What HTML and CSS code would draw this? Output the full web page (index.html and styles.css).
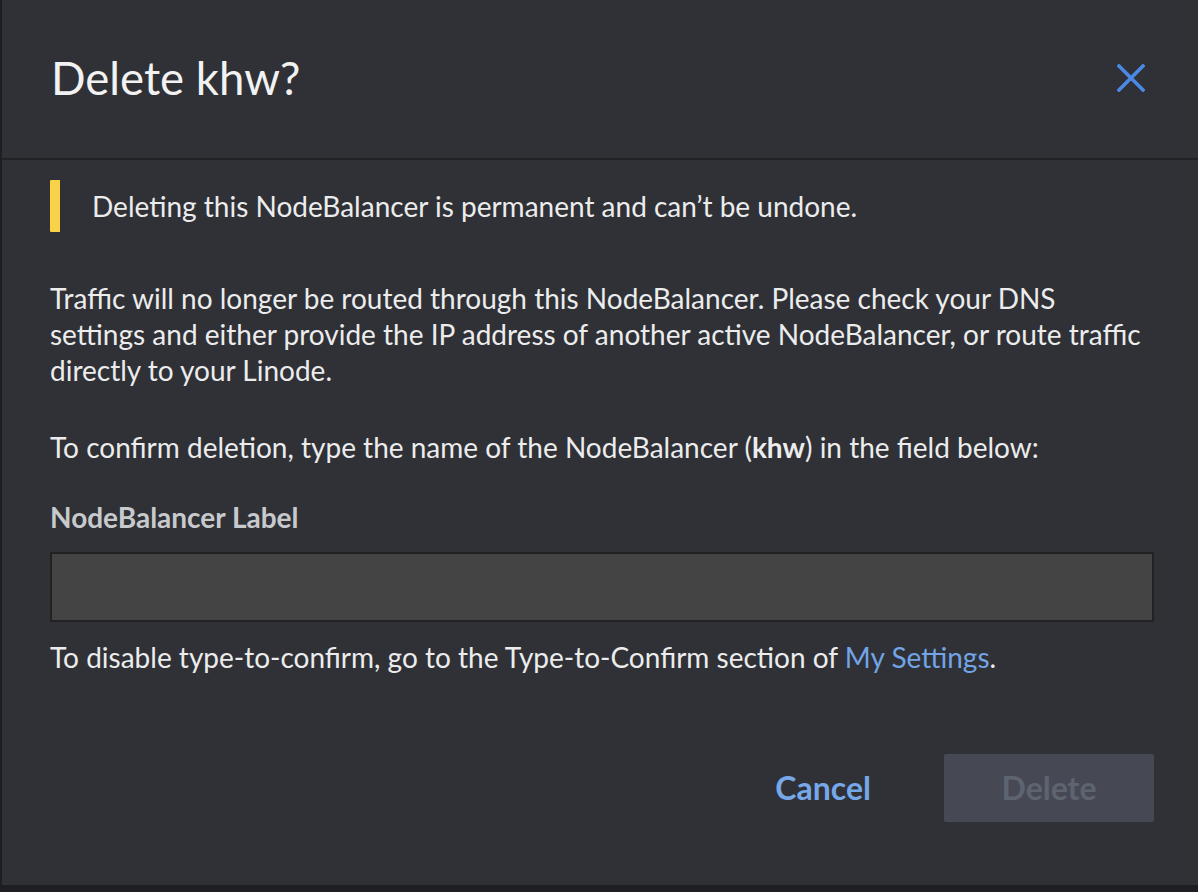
FILE: index.html
```html
<!DOCTYPE html>
<html lang="en">
<head>
<meta charset="utf-8">
<title>Delete khw?</title>
<link rel="stylesheet" href="styles.css">
</head>
<body>
<div class="dialog">
  <header class="dialog-header">
    <h2 class="dialog-title">Delete khw?</h2>
    <button class="close-btn" aria-label="Close">
      <svg width="28" height="28" viewBox="0 0 28 28"><path d="M2 2 L26 26 M26 2 L2 26" stroke="#4a8ae6" stroke-width="3.6" stroke-linecap="square" fill="none"/></svg>
    </button>
  </header>
  <div class="dialog-body">
    <div class="notice">
      <p>Deleting this NodeBalancer is permanent and can’t be undone.</p>
    </div>
    <p class="para first">Traffic will no longer be routed through this NodeBalancer. Please check your DNS settings and either provide the IP address of another active NodeBalancer, or route traffic directly to your Linode.</p>
    <p class="para">To confirm deletion, type the name of the NodeBalancer (<b>khw</b>) in the field below:</p>
    <label class="field-label" for="nb-label">NodeBalancer Label</label>
    <input class="text-input" id="nb-label" type="text">
    <p class="helper">To disable type-to-confirm, go to the Type-to-Confirm section of <a class="link" href="#">My Settings</a>.</p>
    <div class="actions">
      <button class="btn-cancel">Cancel</button>
      <button class="btn-delete" disabled>Delete</button>
    </div>
  </div>
</div>
</body>
</html>
```

FILE: styles.css
```css
html, body {
  margin: 0;
  padding: 0;
}
body {
  background: #1e1f22;
  font-family: Lato, "Open Sans", sans-serif;
  width: 1198px;
  height: 892px;
  overflow: hidden;
}
.dialog {
  margin-left: 2px;
  height: 885px;
  background: #2f3136;
  color: #ececed;
  box-sizing: border-box;
}
.dialog-header {
  height: 160px;
  box-sizing: border-box;
  border-bottom: 2px solid #212225;
  display: flex;
  align-items: center;
  justify-content: space-between;
  padding: 0 53px 2px 49px;
}
.dialog-title {
  margin: 0;
  font-size: 45.5px;
  font-weight: 400;
  color: #f2f2f3;
  line-height: 1.2;
}
.close-btn {
  background: none;
  border: 0;
  padding: 0;
  width: 28px;
  height: 28px;
  cursor: pointer;
  display: flex;
}
.dialog-body {
  padding: 20px 44px 0 48px;
  font-size: 28px;
  line-height: 36px;
}
.notice {
  display: flex;
  align-items: center;
  min-height: 52px;
  border-left: 10px solid #f9d24a;
  border-radius: 1px;
  padding-left: 32px;
}
.notice p {
  margin: 0;
}
.para {
  margin: 0;
}
.para.first {
  margin-top: 48px;
  margin-bottom: 41px;
}
.para b {
  font-weight: 700;
}
.field-label {
  display: block;
  margin-top: 34px;
  font-weight: 700;
  color: #c8c9cc;
}
.text-input {
  display: block;
  box-sizing: border-box;
  width: 100%;
  height: 70px;
  margin-top: 17px;
  background: #444444;
  border: 2px solid #222222;
  color: #eee;
  font: inherit;
  padding: 0 14px;
  outline: none;
}
.helper {
  margin: 17px 0 0;
}
.link {
  color: #72a4e6;
  text-decoration: none;
}
.actions {
  display: flex;
  justify-content: flex-end;
  align-items: center;
  gap: 36px;
  margin-top: 79px;
}
.btn-cancel {
  background: none;
  border: 0;
  font: inherit;
  font-weight: 700;
  font-size: 32px;
  color: #76a7e8;
  padding: 0 37px 0 38px;
  height: 68px;
  cursor: pointer;
}
.btn-delete {
  width: 210px;
  height: 68px;
  border: 0;
  border-radius: 2px;
  background: #464953;
  color: #5e6370;
  font: inherit;
  font-weight: 700;
  font-size: 32px;
}
```
